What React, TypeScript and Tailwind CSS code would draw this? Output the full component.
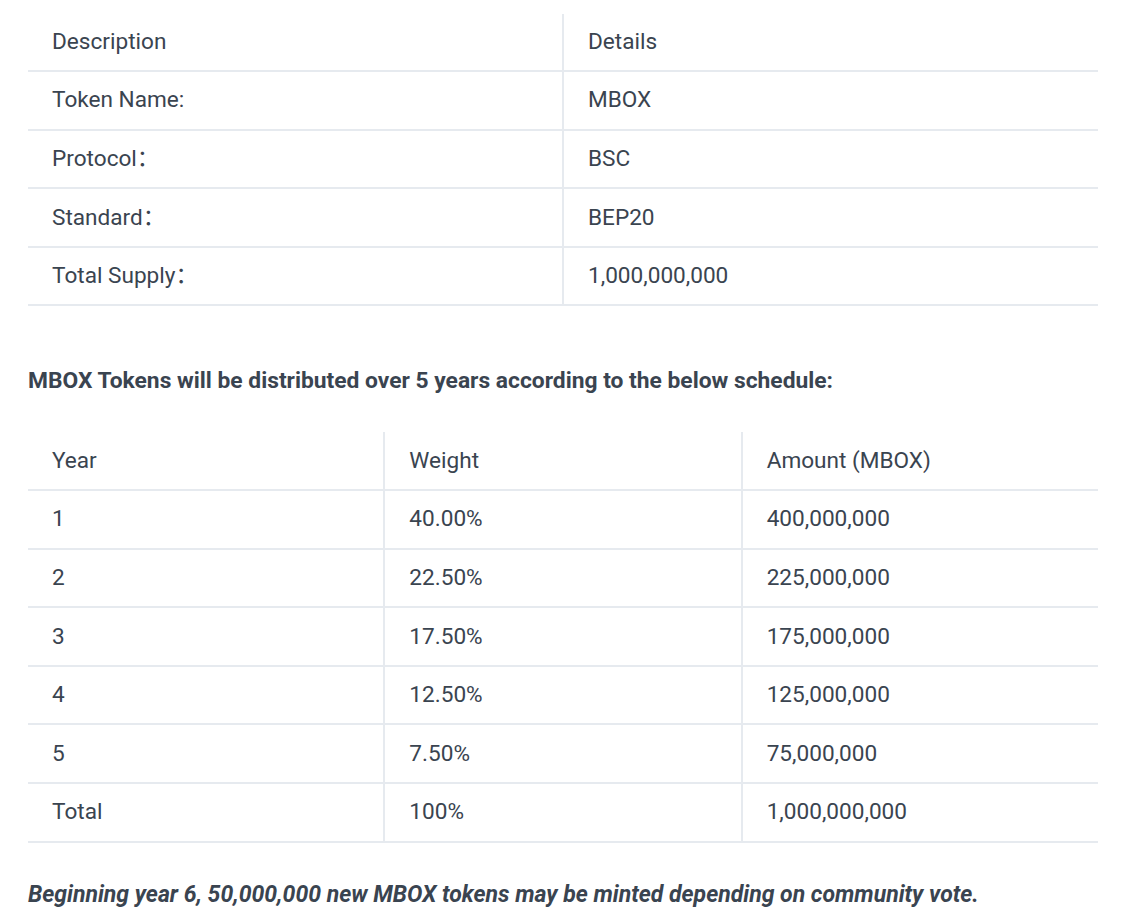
import React from "react";

const font = { fontFamily: 'Roboto, "Noto Sans CJK SC", sans-serif' };

function Row({ cells }: { cells: string[] }) {
  return (
    <div className="flex h-[58.6px] border-b-2 border-[#e6eaef]">
      {cells.map((c, i) => (
        <div
          key={i}
          className={`flex flex-1 items-center pl-6 ${i > 0 ? "border-l-2 border-[#e6eaef]" : ""}`}
        >
          {c}
        </div>
      ))}
    </div>
  );
}

export default function App() {
  const t1 = [
    ["Description", "Details"],
    ["Token Name:", "MBOX"],
    ["Protocol：", "BSC"],
    ["Standard：", "BEP20"],
    ["Total Supply：", "1,000,000,000"],
  ];
  const t2 = [
    ["Year", "Weight", "Amount (MBOX)"],
    ["1", "40.00%", "400,000,000"],
    ["2", "22.50%", "225,000,000"],
    ["3", "17.50%", "175,000,000"],
    ["4", "12.50%", "125,000,000"],
    ["5", "7.50%", "75,000,000"],
    ["Total", "100%", "1,000,000,000"],
  ];
  return (
    <div className="h-[919px] w-[1121px] bg-white text-[#3a4450] text-[22.6px]" style={font}>
      <div className="pl-[28px] pr-[23px] pt-[13.5px]">
        <div>
          {t1.map((r, i) => (
            <Row key={i} cells={r} />
          ))}
        </div>
        <div className="mt-[60px] font-bold text-[22.8px] leading-[30px]">
          MBOX Tokens will be distributed over 5 years according to the below schedule:
        </div>
        <div className="mt-[36px]">
          {t2.map((r, i) => (
            <Row key={i} cells={r} />
          ))}
        </div>
        <div className="mt-[37px] font-bold italic text-[23px] leading-[30px]">
          Beginning year 6, 50,000,000 new MBOX tokens may be minted depending on community vote.
        </div>
      </div>
    </div>
  );
}
